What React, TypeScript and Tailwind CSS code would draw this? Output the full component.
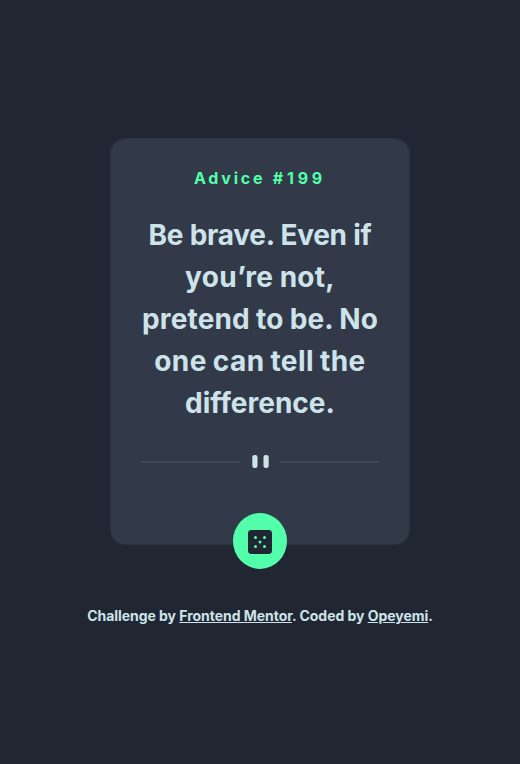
const quote = [
  { text: 'Be brave. Even if', spacing: 'tracking-[-0.28px] [word-spacing:0.2px]' },
  { text: 'you’re not,', spacing: 'tracking-[0.25px] [word-spacing:-0.5px]' },
  { text: 'pretend to be. No', spacing: 'tracking-[0.15px] [word-spacing:-0.6px]' },
  { text: 'one can tell the', spacing: 'tracking-[0.45px] [word-spacing:-1.2px]' },
  { text: 'difference.', spacing: 'tracking-[0px]' },
];

function Divider() {
  return (
    <svg className="mt-[30px] block h-4 w-[238px] shrink-0" viewBox="0 0 238 16" fill="none">
      <path fill="#4F5D74" fillOpacity="0.45" d="M0 7h99v2H0zM139 7h99v2h-99z" />
      <rect x="111.3" y="1" width="5.2" height="13" rx="2.2" fill="#CEE3E9" />
      <rect x="122.5" y="1" width="5.2" height="13" rx="2.2" fill="#CEE3E9" />
    </svg>
  );
}

function Dice() {
  return (
    <svg width="24" height="24" viewBox="0 0 24 24">
      <rect width="24" height="24" rx="3.4" fill="#202733" />
      <g fill="#53FFAA">
        <circle cx="7.5" cy="7.5" r="1.5" />
        <circle cx="16.5" cy="7.5" r="1.5" />
        <circle cx="12" cy="12" r="1.5" />
        <circle cx="7.5" cy="16.5" r="1.5" />
        <circle cx="16.5" cy="16.5" r="1.5" />
      </g>
    </svg>
  );
}

export default function App() {
  return (
    <main className="flex h-[764px] w-[520px] flex-col items-center bg-[#202733] pt-[138px] font-['Inter',sans-serif] font-bold text-[#cee3e9]">
      <section className="flex h-[407px] w-[300px] flex-col items-center rounded-[15px] border border-[#2c3441] bg-[#323a49] bg-clip-padding pt-[27px]">
        <h1 className="whitespace-nowrap text-base leading-6 text-[#53ffaa]">
          <span className="tracking-[2.75px]">Advice</span>
          <span className="tracking-[3.8px]"> #199</span>
        </h1>
        <p className="mt-6 text-center text-[28px] leading-[42px]">
          {quote.map((line) => (
            <span key={line.text} className={`block whitespace-nowrap ${line.spacing}`}>
              {line.text}
            </span>
          ))}
        </p>
        <Divider />
        <button className="mt-[43px] flex h-14 w-[54px] shrink-0 items-center justify-center rounded-[50%] bg-[#53ffaa] pt-[2px]">
          <Dice />
        </button>
      </section>
      <footer className="mt-[60px] whitespace-nowrap text-sm leading-[22px] tracking-[-0.04px]">
        Challenge by <a className="underline">Frontend Mentor</a>. Coded by <a className="underline">Opeyemi</a>.
      </footer>
    </main>
  );
}
